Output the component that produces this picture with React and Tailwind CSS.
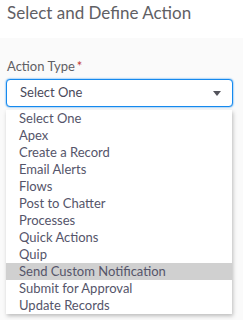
import React from 'react';

const options = [
  'Select One',
  'Apex',
  'Create a Record',
  'Email Alerts',
  'Flows',
  'Post to Chatter',
  'Processes',
  'Quick Actions',
  'Quip',
  'Send Custom Notification',
  'Submit for Approval',
  'Update Records',
];

const App = () => {
  const highlighted = 'Send Custom Notification';

  return (
    <div className="w-[243px] h-[320px] bg-[#fafafa] font-['Lato','Liberation_Sans',sans-serif] overflow-hidden">
      {/* Header */}
      <div className="h-[38px] bg-white px-[7px] pt-[1px]">
        <h1 className="text-[17px] leading-[24px] text-[#5f6064]">Select and Define Action</h1>
      </div>

      <div className="px-[6px] pt-[19px]">
        <label className="block pl-[1px] text-[13px] leading-[18px] text-[#5f6064]">
          Action Type<span className="text-[#c23934] ml-[2px]">*</span>
        </label>

        {/* Select */}
        <div className="mt-[4px] h-[28px] w-[227px] rounded-[4px] border border-[#1589ee] shadow-[0_0_2px_#1589ee] bg-white flex items-center justify-between pl-[13px] pr-[11px]">
          <span className="text-[13px] text-[#4a4a5a]">Select One</span>
          <svg width="8" height="5" viewBox="0 0 8 5">
            <path d="M0 0 L8 0 L4 5 Z" fill="#54545c" />
          </svg>
        </div>

        {/* Options list */}
        <ul className="mt-[3px] w-[226px] bg-white shadow-[1px_2px_4px_rgba(0,0,0,0.25)]">
          {options.map((opt) => (
            <li
              key={opt}
              className={`h-[17px] leading-[17px] pl-[13px] text-[13px] text-[#55556a] ${
                opt === highlighted ? 'bg-[#d0d0d0]' : ''
              }`}
            >
              {opt}
            </li>
          ))}
        </ul>
      </div>
    </div>
  );
};

export default App;
